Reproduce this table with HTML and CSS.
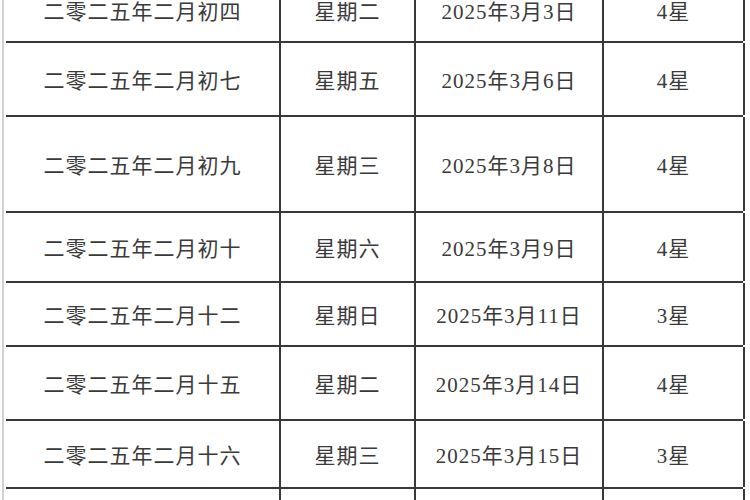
FILE: index.html
```html
<!DOCTYPE html>
<html lang="zh-CN">
<head>
<meta charset="utf-8">
<title>吉日表</title>
<link rel="stylesheet" href="styles.css">
</head>
<body>
<div class="sheet">
  <div class="row r1"><div class="cell">二零二五年二月初四</div><div class="cell">星期二</div><div class="cell">2025年3月3日</div><div class="cell">4星</div></div>
  <div class="row r2"><div class="cell">二零二五年二月初七</div><div class="cell">星期五</div><div class="cell">2025年3月6日</div><div class="cell">4星</div></div>
  <div class="row r3"><div class="cell">二零二五年二月初九</div><div class="cell">星期三</div><div class="cell">2025年3月8日</div><div class="cell">4星</div></div>
  <div class="row r4"><div class="cell">二零二五年二月初十</div><div class="cell">星期六</div><div class="cell">2025年3月9日</div><div class="cell">4星</div></div>
  <div class="row r5"><div class="cell">二零二五年二月十二</div><div class="cell">星期日</div><div class="cell">2025年3月11日</div><div class="cell">3星</div></div>
  <div class="row r6"><div class="cell">二零二五年二月十五</div><div class="cell">星期二</div><div class="cell">2025年3月14日</div><div class="cell">4星</div></div>
  <div class="row r7"><div class="cell">二零二五年二月十六</div><div class="cell">星期三</div><div class="cell">2025年3月15日</div><div class="cell">3星</div></div>
  <div class="row r8"><div class="cell"></div><div class="cell"></div><div class="cell"></div><div class="cell"></div></div>
</div>
</body>
</html>
```
FILE: styles.css
```css
html, body {
  margin: 0;
  padding: 0;
  background: #ffffff;
  overflow: hidden;
}
body {
  width: 750px;
  height: 500px;
}
.sheet {
  margin-top: -21px;
  margin-left: 2px;
  border-left: 2px solid #d2d2d2;
  padding-left: 2px;
  width: 741px;
  box-sizing: border-box;
  font-family: "Liberation Serif", "Noto Sans CJK SC", serif;
  font-size: 21px;
  letter-spacing: 1px;
  color: #3a3a3a;
}
.row {
  display: grid;
  grid-template-columns: 275px 135px 188px 141px;
  border-bottom: 2px solid #383838;
  box-sizing: border-box;
}
.cell {
  display: flex;
  align-items: center;
  justify-content: center;
  border-right: 2px solid #383838;
  box-sizing: border-box;
  white-space: nowrap;
}
.r1 { height: 64px; }
.r2 { height: 74px; }
.r3 { height: 96px; }
.r4 { height: 70px; }
.r5 { height: 64px; }
.r6 { height: 74px; }
.r7 { height: 68px; }
.r8 { height: 70px; }
```
